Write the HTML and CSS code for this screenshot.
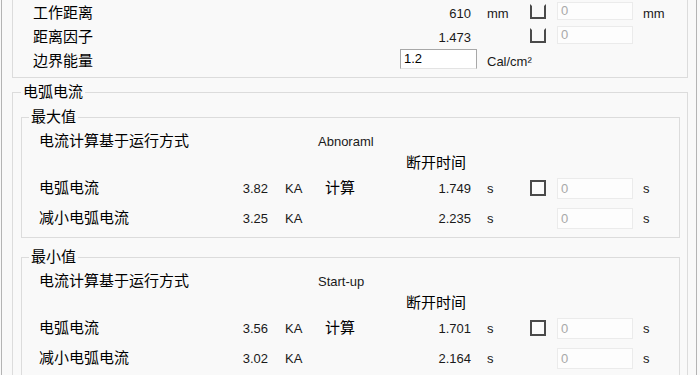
FILE: index.html
```html
<!DOCTYPE html>
<html lang="zh-CN">
<head>
<meta charset="utf-8">
<title>电弧电流</title>
<link rel="stylesheet" href="styles.css">
</head>
<body>
<div class="window">
  <div class="top-box">
    <div class="row top-row first">
      <span class="lbl lbl-top">工作距离</span>
      <span class="num">610</span>
      <span class="unit u-mid">mm</span>
      <span class="chk open"></span>
      <span class="field dis">0</span>
      <span class="unit u-end">mm</span>
    </div>
    <div class="row top-row">
      <span class="lbl lbl-top">距离因子</span>
      <span class="num">1.473</span>
      <span class="unit u-mid"></span>
      <span class="chk open"></span>
      <span class="field dis">0</span>
    </div>
    <div class="row top-row">
      <span class="lbl lbl-energy">边界能量</span>
      <span class="field edit">1.2</span>
      <span class="unit u-end">Cal/cm²</span>
    </div>
  </div>

  <fieldset class="group outer">
    <legend>电弧电流</legend>

    <fieldset class="group inner">
      <legend>最大值</legend>
      <div class="row r-mode">
        <span class="lbl lbl-mode">电流计算基于运行方式</span>
        <span class="mode">Abnoraml</span>
      </div>
      <div class="row r-head">
        <span class="head">断开时间</span>
      </div>
      <div class="row r-val">
        <span class="lbl lbl-val">电弧电流</span>
        <span class="num">3.82</span>
        <span class="unit u-ka">KA</span>
        <span class="calc">计算</span>
        <span class="num">1.749</span>
        <span class="unit u-mid">s</span>
        <span class="chk"></span>
        <span class="field dis">0</span>
        <span class="unit u-end">s</span>
      </div>
      <div class="row r-val2">
        <span class="lbl lbl-val">减小电弧电流</span>
        <span class="num">3.25</span>
        <span class="unit u-ka">KA</span>
        <span class="calc"></span>
        <span class="num">2.235</span>
        <span class="unit u-mid">s</span>
        <span class="chk-space"></span>
        <span class="field dis">0</span>
        <span class="unit u-end">s</span>
      </div>
    </fieldset>

    <fieldset class="group inner second">
      <legend>最小值</legend>
      <div class="row r-mode">
        <span class="lbl lbl-mode">电流计算基于运行方式</span>
        <span class="mode">Start-up</span>
      </div>
      <div class="row r-head">
        <span class="head">断开时间</span>
      </div>
      <div class="row r-val">
        <span class="lbl lbl-val">电弧电流</span>
        <span class="num">3.56</span>
        <span class="unit u-ka">KA</span>
        <span class="calc">计算</span>
        <span class="num">1.701</span>
        <span class="unit u-mid">s</span>
        <span class="chk"></span>
        <span class="field dis">0</span>
        <span class="unit u-end">s</span>
      </div>
      <div class="row r-val2">
        <span class="lbl lbl-val">减小电弧电流</span>
        <span class="num">3.02</span>
        <span class="unit u-ka">KA</span>
        <span class="calc"></span>
        <span class="num">2.164</span>
        <span class="unit u-mid">s</span>
        <span class="chk-space"></span>
        <span class="field dis">0</span>
        <span class="unit u-end">s</span>
      </div>
    </fieldset>
  </fieldset>
</div>
</body>
</html>
```

FILE: styles.css
```css
* { box-sizing: border-box; }

html, body {
  margin: 0;
  padding: 0;
  width: 700px;
  height: 375px;
  overflow: hidden;
  background: #f9f9f9;
}

body {
  font-family: "Liberation Sans", "Noto Sans CJK SC", sans-serif;
  font-size: 15px;
  color: #000;
}

.window {
  margin-left: 1px;
  width: 696px;
  height: 375px;
  border-left: 1px solid #b4b4b4;
  border-right: 1px solid #b4b4b4;
  padding: 0 8px 0 10px;
  overflow: hidden;
}

/* top partially visible box */
.top-box {
  border: 1px solid #dcdcdc;
  border-top: none;
  padding: 1px 0 4px 20px;
}

.row {
  display: flex;
  align-items: center;
  white-space: nowrap;
}

.top-row { height: 24px; }

.lbl { line-height: 20px; }
.lbl-top { width: 398px; }
.lbl-energy { width: 367px; }

.num {
  width: 40px;
  text-align: right;
  font-size: 13px;
  color: #1a1a1a;
}

.unit {
  font-size: 13px;
  color: #1a1a1a;
}
.u-mid { width: 59px; padding-left: 16px; }
.u-end { padding-left: 10px; }
.u-ka { width: 57px; padding-left: 17px; }

.chk {
  width: 16px;
  height: 16px;
  border: 2px solid #4a4a4a;
  background: #fbfbfb;
  margin-right: 11px;
}
.chk.open {
  border-top-color: transparent;
  background: transparent;
  height: 15px;
  margin-bottom: 4px;
}
.chk-space {
  width: 16px;
  margin-right: 11px;
}

.field {
  height: 21px;
  font-size: 13px;
  line-height: 19px;
  padding-left: 3px;
}
.field.dis {
  width: 76px;
  background: #fdfdfd;
  border: 1px solid #ebebeb;
  color: #a9a9a9;
}
.top-row .field.dis {
  height: 18px;
  line-height: 16px;
  margin-bottom: 5px;
}
.field.edit {
  width: 77px;
  height: 20px;
  line-height: 18px;
  background: #fff;
  border: 1px solid #a8a8a8;
  border-bottom-color: #e3e3e3;
  color: #000;
  margin-bottom: 5px;
}

/* group boxes */
.group {
  margin: 0;
  min-inline-size: 0;
  border: 1px solid #dcdcdc;
}
.group > legend {
  padding: 0 2px;
  font-size: 15px;
  line-height: 20px;
  color: #000;
}

.outer {
  margin-top: 4px;
  padding: 5px 7px 0 8px;
  border-bottom: none;
}

.inner {
  padding: 3px 0 8px 7px;
}
.inner.second {
  margin-top: 9px;
}

.r-mode { height: 22px; padding-left: 10px; }
.lbl-mode { width: 279px; }
.mode {
  font-size: 13px;
  color: #1a1a1a;
}

.r-head { height: 22px; padding-left: 377px; }
.head { line-height: 20px; }

.r-val { height: 28px; padding-left: 10px; }
.r-val2 { height: 22px; margin-top: 5px; padding-left: 10px; }
.lbl-val { width: 189px; }
.calc { width: 106px; line-height: 20px; }
```
